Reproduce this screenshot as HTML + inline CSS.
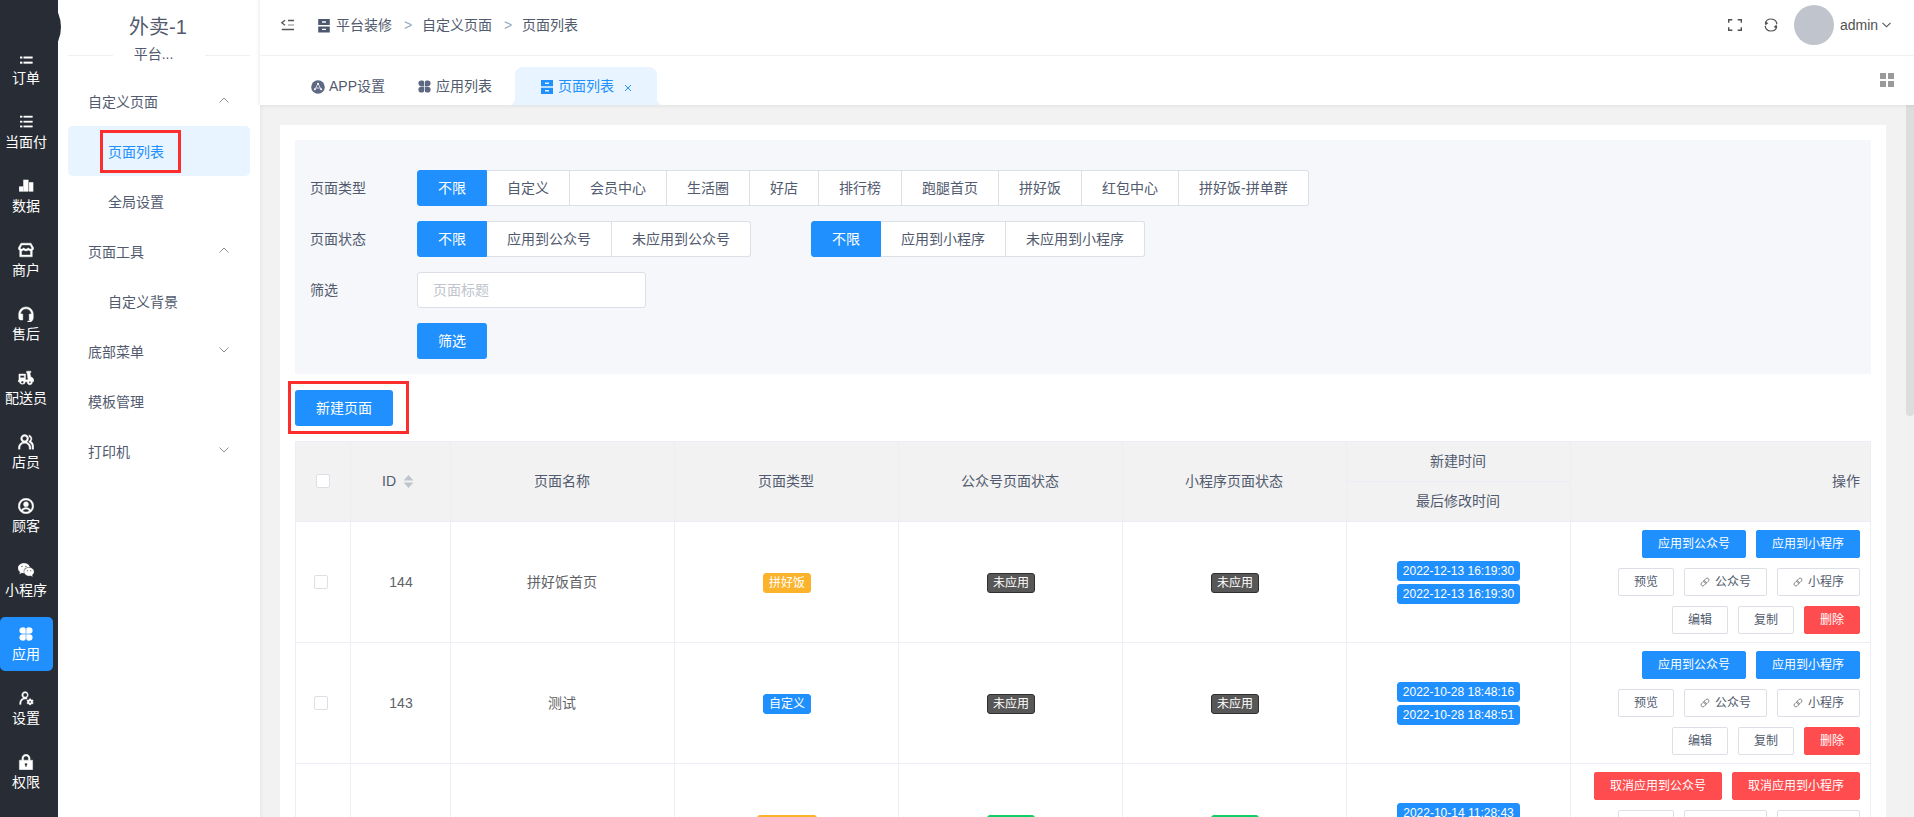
<!DOCTYPE html>
<html lang="zh-CN">
<head>
<meta charset="utf-8">
<title>页面列表</title>
<style>
*{box-sizing:border-box;margin:0;padding:0}
html,body{width:1914px;height:817px;overflow:hidden;background:#f2f2f2}
body{font-family:"Liberation Sans","Noto Sans CJK SC",sans-serif;font-size:14px;color:#515a6e;position:relative}
.abs{position:absolute}
/* dark sidebar */
#side1{position:absolute;left:0;top:0;width:58px;height:817px;background:#282c34;z-index:5}
#logo{position:absolute;left:-9.400px;top:-8px;width:70px;height:70px;border-radius:50%;background:#282c34;z-index:0}
.nav1{position:absolute;z-index:1;left:0;width:53px;height:54px;color:#fff;text-align:center;font-size:14px;border-radius:5px}
.nav1 svg{position:absolute;left:18px;top:9px;width:16px;height:16px;fill:#fff;stroke:#fff;stroke-width:.35;stroke-linejoin:round}
.nav1 span{position:absolute;left:0;width:52px;top:28px;line-height:18px;white-space:nowrap}
.nav1.on{background:#2090fe}
.nav1 svg rect{stroke:none}
/* second sidebar */
#side2{position:absolute;left:58px;top:0;width:202px;height:817px;background:#fff;z-index:4}
#sh1{position:absolute;left:256px;top:0;width:4px;height:105px;z-index:6;background:linear-gradient(90deg,rgba(0,0,0,0),rgba(0,0,0,.05))}
#sh2{position:absolute;left:260px;top:105px;width:4px;height:712px;z-index:6;background:linear-gradient(90deg,rgba(0,21,20,.045),rgba(0,0,0,0))}
#side2 .title{position:absolute;left:-1px;width:202px;top:12px;text-align:center;font-size:20px;line-height:30px;color:#515a6e}
#side2 .hr{position:absolute;left:10px;width:182px;top:55px;height:1px;background:#f0f0f0}
#side2 .sub{position:absolute;left:55px;width:92px;top:43px;padding-right:11px;text-align:center;font-size:14px;line-height:22px;background:#fff;color:#515a6e}
.m{position:absolute;left:30px;line-height:20px;font-size:14px;color:#515a6e;white-space:nowrap}
.m.s{left:50px}
.arrow{position:absolute;left:161px;width:10px;height:6px}
.arrow svg{display:block;width:10px;height:6px;stroke:#909399;fill:none;stroke-width:1}
#active{position:absolute;left:10px;top:126px;width:182px;height:50px;background:#e8f4ff;border-radius:5px}
.redbox{position:absolute;border:3px solid #fc2d2d}
/* header */
#hdr{position:absolute;left:260px;top:0;width:1654px;height:56px;background:#fff;border-bottom:1px solid #f2f2f2;z-index:3}
#hdr .t{position:absolute;top:15px;line-height:20px;font-size:14px;color:#515a6e;white-space:nowrap}
#hdr .sep{color:#97a8be}
#avatar{position:absolute;left:1534px;top:5px;width:40px;height:40px;border-radius:50%;background:#c0c4cc}
/* tabs */
#tabs{position:absolute;left:260px;top:56px;width:1654px;height:49px;background:#fff;z-index:2;box-shadow:0 1px 4px rgba(0,21,41,.08)}
#tabs .t{position:absolute;top:20px;line-height:20px;font-size:14px;color:#515a6e;white-space:nowrap}
#tabon{position:absolute;left:255px;top:11px;width:142px;height:38px;background:#e8f4ff;border-radius:8px 8px 0 0}
#tabon:before,#tabon:after{content:"";position:absolute;bottom:0;width:7px;height:7px}
#tabon:before{left:-7px;background:radial-gradient(circle at 0 0,transparent 7px,#e8f4ff 7.5px)}
#tabon:after{right:-7px;background:radial-gradient(circle at 100% 0,transparent 7px,#e8f4ff 7.5px)}
/* card */
#card{position:absolute;left:280px;top:125px;width:1606px;height:700px;background:#fff}
#filter{position:absolute;left:295px;top:140px;width:1576px;height:234px;background:#f5f7fa}
.lbl{position:absolute;left:310px;line-height:20px;font-size:14px;color:#515a6e}
.rg{position:absolute;display:flex;height:36px}
.rb{height:36px;line-height:34px;padding:0 20px;border:1px solid #dcdfe6;border-left:0;background:#fff;color:#515a6e;font-size:14px;white-space:nowrap}
.rb:first-child{border-left:1px solid #dcdfe6;border-radius:3px 0 0 3px}
.rb:last-child{border-radius:0 3px 3px 0}
.rb.on{background:#2090fe;border-color:#2090fe;color:#fff}
.btn{position:absolute;height:36px;line-height:36px;background:#2090fe;color:#fff;font-size:14px;text-align:center;border-radius:3px}
#inp{position:absolute;left:417px;top:272px;width:229px;height:36px;border:1px solid #dcdfe6;border-radius:3px;background:#fff;line-height:34px;padding-left:15px;color:#c0c4cc;font-size:14px}
/* table */
#tbl{position:absolute;left:295px;top:441px;width:1576px;height:400px}
#th{position:absolute;left:0;top:0;width:1576px;height:80px;background:#f2f2f2}
.vl{position:absolute;top:0;width:1px;height:400px;background:#ebeef5}
.hl{position:absolute;left:0;width:1576px;height:1px;background:#ebeef5}
.hc{position:absolute;line-height:20px;font-size:14px;color:#515a6e;text-align:center;white-space:nowrap}
.tc{position:absolute;line-height:20px;font-size:14px;color:#606266;text-align:center;white-space:nowrap}
.cb{position:absolute;width:14px;height:14px;border:1px solid #dcdfe6;border-radius:2px;background:#fff}
.tag{position:absolute;height:20px;line-height:18px;font-size:12px;color:#fff;text-align:center;border-radius:3px;border:1px solid transparent;white-space:nowrap}
.tag.or{background:#fbb32c;border-color:#fbb32c}
.tag.bl{background:#2090fe;border-color:#2090fe}
.tag.dk{background:#575757;border-color:#303030}
.tag.gr{background:#13ce66;border-color:#13ce66}
.tag.tm{font-size:12px}
.ob{position:absolute;height:28px;line-height:27px;font-size:12px;text-align:center;border-radius:2px;border:1px solid #dcdfe6;background:#fff;color:#515a6e;white-space:nowrap}
.ob.p{background:#2090fe;border-color:#2090fe;color:#fff}
.ob.d{background:#ff4d4f;border-color:#ff4d4f;color:#fff}
.ob svg{width:10px;height:10px;vertical-align:-1px;margin-right:5px;stroke:#808080;fill:none;stroke-width:.9}
/* scrollbar */
#sbt{position:absolute;left:1906px;top:105px;width:8px;height:712px;background:#f1f1f1}
#sb{position:absolute;left:1906px;top:105px;width:8px;height:311px;background:#dddddd;border-radius:0 0 4px 4px}
</style>
</head>
<body>
<div id="sbt"></div><div id="sb"></div><div id="sh1"></div><div id="sh2"></div>
<div id="card"></div>
<div id="filter"></div>

<!-- SIDEBAR1 -->
<div id="side1"><div id="logo"></div>
<div class="nav1" style="top:41px"><svg viewBox="0 0 14 14"><rect x="1.750" y="5.700" width="2.100" height="1.750"/><rect x="4.800" y="5.700" width="8" height="1.750"/><rect x="1.750" y="10.200" width="2.100" height="1.750"/><rect x="4.800" y="10.200" width="8" height="1.750"/></svg><span>订单</span></div>
<div class="nav1" style="top:105px"><svg viewBox="0 0 14 14"><rect x="1.750" y="1.560" width="2.100" height="1.600"/><rect x="4.800" y="1.560" width="8" height="1.600"/><rect x="1.750" y="5.940" width="2.100" height="1.600"/><rect x="4.800" y="5.940" width="8" height="1.600"/><rect x="1.750" y="10.100" width="2.100" height="1.600"/><rect x="4.800" y="10.100" width="8" height="1.600"/></svg><span>当面付</span></div>
<div class="nav1" style="top:169px"><svg viewBox="0 0 14 14"><rect x="0.960" y="7.350" width="3.700" height="4.550"/><rect x="4.600" y="1.500" width="4.600" height="10.400"/><rect x="9.700" y="3.700" width="3.700" height="8.200"/></svg><span>数据</span></div>
<div class="nav1" style="top:233px"><svg viewBox="0 0 14 14"><path d="M2.6 1h8.8l2.4 4.2c0 1-.5 1.8-1.3 2.2V13H1.5V7.400C.7 7 .2 6.200.2 5.200zM3.400 2.600 2 5.200c.1.600.600 1 1.200 1s1.200-.5 1.300-1h1c.1.500.7 1 1.500 1s1.400-.5 1.500-1h1c.1.500.600 1 1.300 1s1.100-.4 1.200-1l-1.400-2.600zM3.100 7.800v3.600h7.800V7.800c-.7 0-1.400-.3-1.900-.8-.5.500-1.200.8-2 .8s-1.500-.3-2-.8c-.5.500-1.200.8-1.900.8z"/></svg><span>商户</span></div>
<div class="nav1" style="top:297px"><svg viewBox="0 0 14 14"><path d="M7 .8C3.400.8.600 3.600.600 7.200v3c0 1.200.9 2.100 2.100 2.100h1.500V7H2.300C2.400 4.500 4.500 2.500 7 2.500s4.600 2 4.700 4.500H9.800v5.300h1c-.4.600-1.100.9-2.300.9v1.300c2.700 0 4.100-1.300 4.700-3.100.1-.3.200-.7.200-1.200v-3C13.400 3.600 10.600.8 7 .8z"/></svg><span>售后</span></div>
<div class="nav1" style="top:361px"><svg viewBox="0 0 14 14"><path d="M7.500 0h3.800v1.500h-1l1 3.700c1.500.3 2.600 1.600 2.600 3.200 0 .2 0 .5-.1.700h-1.200a2.300 2.300 0 1 1-4.500.2H6.600a2.800 2.800 0 0 1-5.500 0H0V8.100h.8V2.500h5.800v5.100h2.200l-.9-6.100h-.4zM1.900 3.800v2h3.600v-2zM3.800 8.600a1.100 1.100 0 1 0 0 2.300 1.100 1.100 0 0 0 0-2.300zm6.600.2a.9.9 0 1 0 0 1.800.9.9 0 0 0 0-1.800z" transform="translate(0,1)"/></svg><span>配送员</span></div>
<div class="nav1" style="top:425px"><svg viewBox="0 0 14 14"><path d="M5.800.5a3.500 3.500 0 0 0-1.900 6.400C1.800 7.700.3 9.700.3 12.100v1.200h1.500v-1.200c0-2.200 1.800-4 4-4s4 1.800 4 4v1.200h1.500v-1.200c0-2.400-1.500-4.400-3.600-5.200A3.500 3.500 0 0 0 5.800.5zm0 1.500a2 2 0 1 1 0 4 2 2 0 0 1 0-4zM9.600.8v1.500a2 2 0 0 1 .5 3.700l-.6.300.3.900.4.200c1.300.7 2.100 2.100 2.100 3.600v2.300h1.500V11c0-1.900-.9-3.600-2.400-4.600A3.500 3.500 0 0 0 9.600.8z"/></svg><span>店员</span></div>
<div class="nav1" style="top:489px"><svg viewBox="0 0 14 14"><path d="M7 .2a6.800 6.800 0 1 0 0 13.600A6.800 6.800 0 0 0 7 .2zm0 1.500a5.300 5.300 0 0 1 4.100 8.700C10.200 9.100 8.700 8.300 7 8.300s-3.200.8-4.100 2.100A5.300 5.300 0 0 1 7 1.700zm0 1.600a2.200 2.200 0 1 0 0 4.400 2.200 2.200 0 0 0 0-4.400zm0 6.400c1.300 0 2.400.7 3 1.700-.8.600-1.900.900-3 .900s-2.200-.3-3-.9c.600-1 1.700-1.700 3-1.700z"/></svg><span>顾客</span></div>
<div class="nav1" style="top:553px"><svg viewBox="0 0 14 14"><path d="M5.200 1.200C2.400 1.200.1 3.100.1 5.400c0 1.300.7 2.500 1.900 3.300l-.5 1.500 1.800-.9c.6.200 1.200.3 1.800.3-.1-.4-.2-.8-.2-1.200 0-2.300 2.100-4.100 4.700-4.100h.5C9.700 2.500 7.700 1.200 5.200 1.200zM3.500 3.300a.7.700 0 1 1 0 1.400.7.700 0 0 1 0-1.400zm3.400 0a.7.700 0 1 1 0 1.400.7.700 0 0 1 0-1.400zM9.700 5c-2.300 0-4.200 1.600-4.200 3.500S7.400 12 9.700 12c.5 0 1-.1 1.400-.2l1.500.8-.4-1.300c1-.7 1.700-1.700 1.700-2.800C13.900 6.600 12 5 9.700 5zM8.300 7a.6.600 0 1 1 0 1.200.6.600 0 0 1 0-1.200zm2.800 0a.6.600 0 1 1 0 1.200.6.600 0 0 1 0-1.200z"/></svg><span>小程序</span></div>
<div class="nav1 on" style="top:617px"><svg viewBox="0 0 14 14"><g transform="translate(7 7) scale(.86) translate(-7 -7)"><path d="M3.500.5h1.300c1 0 1.800.8 1.800 1.800v4.300H3.500a3 3 0 0 1 0-6.100zM9.200.5h1.300a3 3 0 0 1 0 6.100H7.400V2.300c0-1 .8-1.800 1.800-1.800zM3.500 7.400h3.100v4.300c0 1-.8 1.800-1.800 1.800H3.500a3 3 0 0 1 0-6.100zM7.400 7.400h3.100a3 3 0 0 1 0 6.100H9.200c-1 0-1.800-.8-1.800-1.800z"/></g></svg><span>应用</span></div>
<div class="nav1" style="top:681px"><svg viewBox="0 0 14 14"><g transform="translate(7 7) scale(.86) translate(-7 -7)"><path d="M6.200.3a3.600 3.600 0 0 0-2 6.600C2 7.800.5 9.900.5 12.300v1.200H2v-1.200c0-2.300 1.900-4.200 4.200-4.200.5 0 1 .1 1.400.2l.5-1.400-.3-.1A3.600 3.600 0 0 0 6.200.3zm0 1.500a2.100 2.100 0 1 1 0 4.200 2.100 2.100 0 0 1 0-4.200zM10.400 7.800l-.3.900-.6.300-.9-.3-.8 1.300.7.600v.7l-.7.600.8 1.300.9-.3.600.3.300.9h1.500l.3-.9.600-.3.900.3.800-1.300-.7-.6v-.7l.7-.6-.8-1.300-.9.300-.6-.3-.3-.9zm.8 2.200a1 1 0 1 1 0 2 1 1 0 0 1 0-2z"/></g></svg><span>设置</span></div>
<div class="nav1" style="top:745px"><svg viewBox="0 0 14 14"><path d="M7 .2C5 .2 3.400 1.800 3.400 3.800v1.600H1.200v8.400h11.600V5.400h-2.200V3.800C10.600 1.800 9 .2 7 .2zm0 1.500c1.200 0 2.100.9 2.100 2.100v1.600H4.900V3.800c0-1.200.9-2.100 2.100-2.100zm0 6.100c.7 0 1.200.5 1.200 1.200 0 .4-.2.800-.5 1v1.300H6.300V10c-.3-.2-.5-.6-.5-1 0-.7.5-1.200 1.200-1.200z"/></svg><span>权限</span></div>
</div>
<!-- /SIDEBAR1 -->
<!-- SIDEBAR2 -->
<div id="side2">
<div class="title">外卖-1</div>
<div class="hr"></div>
<div class="sub">平台...</div>
<div id="active"></div>
<div class="m" style="top:92px">自定义页面</div><div class="arrow" style="top:97px"><svg viewBox="0 0 10 6"><path d="M.5 5.500 5 1l4.500 4.500"/></svg></div>
<div class="m s" style="top:142px;color:#2090fe">页面列表</div>
<div class="redbox" style="left:42px;top:130px;width:81px;height:43px"></div>
<div class="m s" style="top:192px">全局设置</div>
<div class="m" style="top:242px">页面工具</div><div class="arrow" style="top:247px"><svg viewBox="0 0 10 6"><path d="M.5 5.500 5 1l4.500 4.500"/></svg></div>
<div class="m s" style="top:292px">自定义背景</div>
<div class="m" style="top:342px">底部菜单</div><div class="arrow" style="top:347px"><svg viewBox="0 0 10 6"><path d="M.5.5 5 5 9.500.5"/></svg></div>
<div class="m" style="top:392px">模板管理</div>
<div class="m" style="top:442px">打印机</div><div class="arrow" style="top:447px"><svg viewBox="0 0 10 6"><path d="M.5.5 5 5 9.500.5"/></svg></div>
</div>
<!-- /SIDEBAR2 -->
<!-- HEADER -->
<div id="hdr">
<svg class="abs" style="left:20px;top:18px;width:15px;height:14px" viewBox="0 0 15 14"><path d="M8 2.500h6M1.800 11.500h12.200M5 2.200 1.800 4.700l3.200 2.500" fill="none" stroke="#555" stroke-width="1.300"/><path d="M8 7h6" fill="none" stroke="#aaa" stroke-width="1.400"/></svg>
<svg class="abs" style="left:58px;top:19px;width:12px;height:13.500px" viewBox="0 0 12 14"><path d="M0 0h12v6.300H0zM4 2.400v1.500h4V2.400zM0 7.700h12V14H0zM4 10v1.500h4V10z" fill="#4d5870"/></svg>
<div class="t" style="left:76px">平台装修</div>
<div class="t sep" style="left:144px">&gt;</div>
<div class="t" style="left:162px">自定义页面</div>
<div class="t sep" style="left:244px">&gt;</div>
<div class="t" style="left:262px">页面列表</div>
<svg class="abs" style="left:1468px;top:19px;width:14px;height:12px" viewBox="0 0 14 12"><path d="M.7 3.800V.7h3.600M9.700.7h3.600v3.100M13.300 8.200v3.100H9.700M4.300 11.300H.7V8.200" fill="none" stroke="#515151" stroke-width="1.400"/></svg>
<svg class="abs" style="left:1504px;top:18px;width:14px;height:14px" viewBox="0 0 14 14"><path d="M1.20 5.45A6.0 6.0 0 0 1 12.94 6.16M12.80 8.55A6.0 6.0 0 0 1 1.06 7.84" fill="none" stroke="#515151" stroke-width="1.200"/><path d="M.9 3.600l3.500 1.500-3 2.300zM13.100 10.400l-3.500-1.500 3-2.300z" fill="#515151"/></svg>
<div id="avatar"></div>
<div class="t" style="left:1580px;color:#515151">admin</div>
<svg class="abs" style="left:1622px;top:22px;width:9px;height:6px" viewBox="0 0 9 6"><path d="M.5.800 4.500 4.800 8.500.8" fill="none" stroke="#515151" stroke-width="1.100"/></svg>
</div>
<!-- /HEADER -->
<!-- TABS -->
<div id="tabs">
<div id="tabon"></div>
<svg class="abs" style="left:51px;top:24px;width:14px;height:14px" viewBox="0 0 14 14"><circle cx="7" cy="7" r="6.800" fill="#5d6882"/><path d="M7 3.600 4 9.200M7 3.600l3 5.600M5 8h4" fill="none" stroke="#fff" stroke-width=".8" stroke-opacity=".9"/><circle cx="7" cy="3.700" r="1" fill="#fff"/><circle cx="3.900" cy="9.300" r="1" fill="#fff"/><circle cx="10.100" cy="9.300" r="1" fill="#fff"/></svg>
<div class="t" style="left:69px">APP设置</div>
<svg class="abs" style="left:158px;top:24px;width:13px;height:13px" viewBox="0 0 14 14"><path fill="#5d6882" d="M3.500.5h1.300c1 0 1.800.8 1.800 1.800v4.300H3.500a3 3 0 0 1 0-6.100zM9.200.5h1.300a3 3 0 0 1 0 6.100H7.400V2.300c0-1 .8-1.800 1.800-1.800zM3.500 7.400h3.100v4.300c0 1-.8 1.800-1.800 1.800H3.500a3 3 0 0 1 0-6.100zM7.400 7.400h3.100a3 3 0 0 1 0 6.100H9.200c-1 0-1.800-.8-1.800-1.800z"/></svg>
<div class="t" style="left:176px">应用列表</div>
<svg class="abs" style="left:281px;top:24px;width:12px;height:14px" viewBox="0 0 12 14"><path d="M0 0h12v6.300H0zM4 2.400v1.500h4V2.400zM0 7.700h12V14H0zM4 10v1.500h4V10z" fill="#2090fe"/></svg>
<div class="t" style="left:298px;color:#2090fe">页面列表</div>
<svg class="abs" style="left:364px;top:28px;width:8px;height:8px" viewBox="0 0 8 8"><path d="M1 1l6 6M7 1 1 7" stroke="#2090fe" stroke-width="1" fill="none"/></svg>
<svg class="abs" style="left:1620px;top:17px;width:14px;height:14px" viewBox="0 0 14 14"><path fill="#999" d="M0 0h6v6H0zM8 0h6v6H8zM0 8h6v6H0zM8 8h6v6H8z"/></svg>
</div>
<!-- /TABS -->
<!-- FILTER -->
<div class="lbl" style="top:178px">页面类型</div>
<div class="rg" style="left:417px;top:170px"><div class="rb on">不限</div><div class="rb">自定义</div><div class="rb">会员中心</div><div class="rb">生活圈</div><div class="rb">好店</div><div class="rb">排行榜</div><div class="rb">跑腿首页</div><div class="rb">拼好饭</div><div class="rb">红包中心</div><div class="rb">拼好饭-拼单群</div></div>
<div class="lbl" style="top:229px">页面状态</div>
<div class="rg" style="left:417px;top:221px"><div class="rb on">不限</div><div class="rb">应用到公众号</div><div class="rb">未应用到公众号</div></div>
<div class="rg" style="left:811px;top:221px"><div class="rb on">不限</div><div class="rb">应用到小程序</div><div class="rb">未应用到小程序</div></div>
<div class="lbl" style="top:280px">筛选</div>
<div id="inp">页面标题</div>
<div class="btn" style="left:417px;top:323px;width:70px">筛选</div>
<div class="btn" style="left:295px;top:390px;width:98px">新建页面</div>
<div class="redbox" style="left:288px;top:381px;width:121px;height:53px"></div>
<!-- /FILTER -->
<!-- TABLE -->
<div id="tbl"><div id="th"></div>
<div class="vl" style="left:0px"></div>
<div class="vl" style="left:55px"></div>
<div class="vl" style="left:155px"></div>
<div class="vl" style="left:379px"></div>
<div class="vl" style="left:603px"></div>
<div class="vl" style="left:827px"></div>
<div class="vl" style="left:1051px"></div>
<div class="vl" style="left:1275px"></div>
<div class="vl" style="left:1575px"></div>
<div class="hl" style="top:0px"></div>
<div class="hl" style="top:80px"></div>
<div class="hl" style="top:201px"></div>
<div class="hl" style="top:322px"></div>
<div class="hl" style="top:40px;left:1051px;width:224px"></div>
<div class="cb" style="left:21px;top:33px"></div>
<div class="hc" style="left:87px;top:30px">ID</div>
<svg class="abs" style="left:108px;top:34px;width:11px;height:13px" viewBox="0 0 10 12"><path d="M5 0 9.500 5h-9zM5 12 .5 7h9z" fill="#c0c4cc"/></svg>
<div class="hc" style="left:155px;width:224px;top:30px">页面名称</div>
<div class="hc" style="left:379px;width:224px;top:30px">页面类型</div>
<div class="hc" style="left:603px;width:224px;top:30px">公众号页面状态</div>
<div class="hc" style="left:827px;width:224px;top:30px">小程序页面状态</div>
<div class="hc" style="left:1051px;width:224px;top:10px">新建时间</div>
<div class="hc" style="left:1051px;width:224px;top:50px">最后修改时间</div>
<div class="hc" style="left:1275px;width:290px;top:30px;text-align:right">操作</div>
<div class="cb" style="left:19px;top:134px"></div>
<div class="tc" style="left:56px;width:100px;top:131px">144</div>
<div class="tc" style="left:155px;width:224px;top:131px">拼好饭首页</div>
<div class="tag or" style="left:468px;width:48px;top:132px">拼好饭</div>
<div class="tag dk" style="left:692px;width:48px;top:132px">未应用</div>
<div class="tag dk" style="left:916px;width:48px;top:132px">未应用</div>
<div class="tag bl tm" style="left:1102px;width:123px;top:120px">2022-12-13 16:19:30</div>
<div class="tag bl tm" style="left:1102px;width:123px;top:143px">2022-12-13 16:19:30</div>
<div class="ob p" style="left:1347px;width:104px;top:89px">应用到公众号</div>
<div class="ob p" style="left:1461px;width:104px;top:89px">应用到小程序</div>
<div class="ob" style="left:1323px;width:56px;top:127px">预览</div>
<div class="ob" style="left:1389px;width:83px;top:127px"><svg viewBox="0 0 10 10"><g transform="rotate(-45 5 5)"><rect x="0.200" y="3.200" width="5.600" height="3.600" rx="1.800"/><rect x="4.200" y="3.200" width="5.600" height="3.600" rx="1.800"/></g></svg>公众号</div>
<div class="ob" style="left:1482px;width:83px;top:127px"><svg viewBox="0 0 10 10"><g transform="rotate(-45 5 5)"><rect x="0.200" y="3.200" width="5.600" height="3.600" rx="1.800"/><rect x="4.200" y="3.200" width="5.600" height="3.600" rx="1.800"/></g></svg>小程序</div>
<div class="ob" style="left:1377px;width:56px;top:165px">编辑</div>
<div class="ob" style="left:1443px;width:56px;top:165px">复制</div>
<div class="ob d" style="left:1509px;width:56px;top:165px">删除</div>
<div class="cb" style="left:19px;top:255px"></div>
<div class="tc" style="left:56px;width:100px;top:252px">143</div>
<div class="tc" style="left:155px;width:224px;top:252px">测试</div>
<div class="tag bl" style="left:468px;width:48px;top:253px">自定义</div>
<div class="tag dk" style="left:692px;width:48px;top:253px">未应用</div>
<div class="tag dk" style="left:916px;width:48px;top:253px">未应用</div>
<div class="tag bl tm" style="left:1102px;width:123px;top:241px">2022-10-28 18:48:16</div>
<div class="tag bl tm" style="left:1102px;width:123px;top:264px">2022-10-28 18:48:51</div>
<div class="ob p" style="left:1347px;width:104px;top:210px">应用到公众号</div>
<div class="ob p" style="left:1461px;width:104px;top:210px">应用到小程序</div>
<div class="ob" style="left:1323px;width:56px;top:248px">预览</div>
<div class="ob" style="left:1389px;width:83px;top:248px"><svg viewBox="0 0 10 10"><g transform="rotate(-45 5 5)"><rect x="0.200" y="3.200" width="5.600" height="3.600" rx="1.800"/><rect x="4.200" y="3.200" width="5.600" height="3.600" rx="1.800"/></g></svg>公众号</div>
<div class="ob" style="left:1482px;width:83px;top:248px"><svg viewBox="0 0 10 10"><g transform="rotate(-45 5 5)"><rect x="0.200" y="3.200" width="5.600" height="3.600" rx="1.800"/><rect x="4.200" y="3.200" width="5.600" height="3.600" rx="1.800"/></g></svg>小程序</div>
<div class="ob" style="left:1377px;width:56px;top:286px">编辑</div>
<div class="ob" style="left:1443px;width:56px;top:286px">复制</div>
<div class="ob d" style="left:1509px;width:56px;top:286px">删除</div>
<div class="ob d" style="left:1299px;width:128px;top:331px">取消应用到公众号</div>
<div class="ob d" style="left:1437px;width:128px;top:331px">取消应用到小程序</div>
<div class="tag or" style="left:462px;width:60px;top:374px">会员中心</div>
<div class="tag gr" style="left:692px;width:48px;top:374px">已应用</div>
<div class="tag gr" style="left:916px;width:48px;top:374px">已应用</div>
<div class="tag bl tm" style="left:1102px;width:123px;top:362px">2022-10-14 11:28:43</div>
<div class="ob" style="left:1323px;width:56px;top:369px">预览</div>
<div class="ob" style="left:1389px;width:83px;top:369px"><svg viewBox="0 0 10 10"><g transform="rotate(-45 5 5)"><rect x="0.200" y="3.200" width="5.600" height="3.600" rx="1.800"/><rect x="4.200" y="3.200" width="5.600" height="3.600" rx="1.800"/></g></svg>公众号</div>
<div class="ob" style="left:1482px;width:83px;top:369px"><svg viewBox="0 0 10 10"><g transform="rotate(-45 5 5)"><rect x="0.200" y="3.200" width="5.600" height="3.600" rx="1.800"/><rect x="4.200" y="3.200" width="5.600" height="3.600" rx="1.800"/></g></svg>小程序</div>
</div>
<!-- /TABLE -->
</body>
</html>
